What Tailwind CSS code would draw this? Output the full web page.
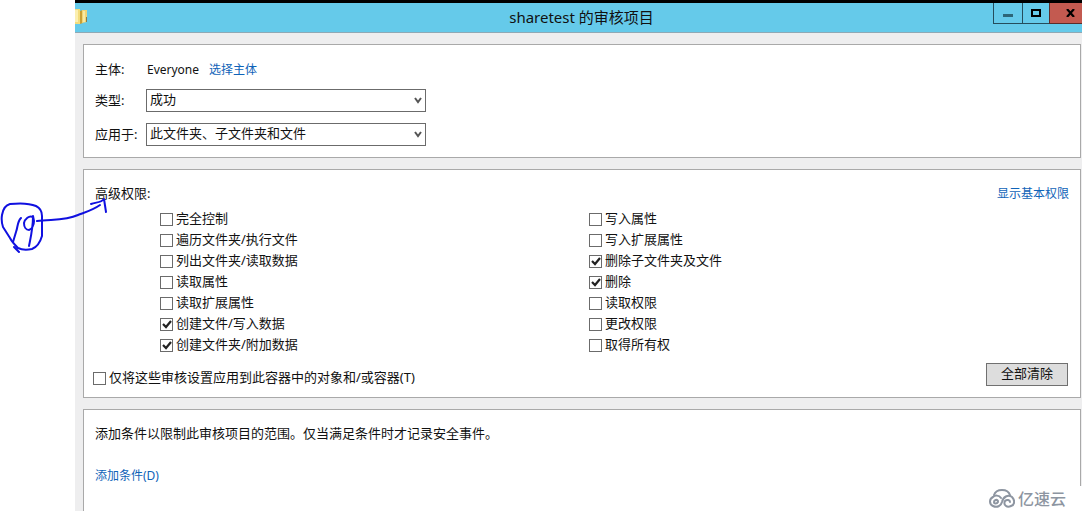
<!DOCTYPE html>
<html lang="zh-CN">
<head>
<meta charset="utf-8">
<meta name="viewport" content="width=device-width, initial-scale=1">
<title>sharetest 的审核项目</title>
<script src="https://cdn.jsdelivr.net/npm/@tailwindcss/browser@4"></script>
</head>
<body class="relative flex min-h-screen bg-white pl-[75px] font-['Noto_Sans','Noto_Sans_CJK_SC',sans-serif] text-[13px] leading-[21px] text-[#111]">
<svg class="hidden" aria-hidden="true"><symbol id="tick" viewBox="0 0 13 13"><path d="M3 6l3 3 5-6" fill="none" stroke="#222" stroke-width="2.2"/></symbol></svg>
<div class="flex min-w-0 flex-1 flex-col border-t-3 border-black bg-[#eeeeef]">
  <header class="flex h-[30px] items-start border-b border-[#8fa9b5] bg-[#65caea]">
    <div class="flex flex-1 pt-1.5">
      <svg class="h-[15px] w-[13px]" viewBox="0 0 13 15" aria-hidden="true">
        <path d="M0 0h5v15H0z" fill="#f3dc7c"/><path d="M0 1h3v12H0z" fill="#fbefb0"/>
        <path d="M5 2l3-1v13l-3 1z" fill="#c99f35"/><path d="M7 1h5v12l-5 1z" fill="#f0d576"/><path d="M8 2h2v11H8z" fill="#f9e9a3"/><path d="M11 8h1v5h-1z" fill="#8b7b4a"/>
      </svg>
    </div>
    <h1 class="pt-[3px] pl-1.5 text-[15px] leading-[22px]">sharetest 的审核项目</h1>
    <div class="flex flex-1 justify-end">
      <button type="button" aria-label="最小化" class="flex h-[21px] w-[29px] items-center justify-center border-b border-l border-[#254d5c] pt-1"><svg class="h-[3px] w-[10px]" viewBox="0 0 10 3"><path d="M0 0h10v3H0z" fill="#2d6678"/></svg></button>
      <button type="button" aria-label="最大化" class="flex h-[21px] w-[27px] items-center justify-center border-b border-l border-[#254d5c]"><svg class="h-[8px] w-[10px]" viewBox="0 0 10 8"><path d="M1 1h8v6H1z" fill="none" stroke="#000" stroke-width="2"/></svg></button>
      <button type="button" aria-label="关闭" class="flex h-[21px] w-[33px] items-center justify-end border-b border-l border-[#5c2d2a] bg-[#c35a50] pr-[7px]"><svg class="h-[8px] w-[9px]" viewBox="0 0 9 8"><path d="M1 0l7 8M8 0L1 8" stroke="#000" stroke-width="2.2"/></svg></button>
    </div>
  </header>

  <main class="flex flex-1 flex-col gap-[11px] pt-[11px] pr-px pl-2">
    <section class="flex flex-col gap-[11px] border border-[#a9a9a9] bg-white pt-[15px] pb-[11px] pl-[11px]">
      <div class="flex h-[18px] items-center">
        <span class="w-[52px]">主体:</span>
        <span class="text-[12px]">Everyone</span>
        <a href="#" class="ml-[10px] text-[12px] text-[#0f63b8]">选择主体</a>
      </div>
      <div class="flex h-[23px] items-center">
        <label for="type" class="w-[51px] shrink-0">类型:</label>
        <div class="relative w-[280px]">
          <select id="type" class="block h-[23px] w-full appearance-none border border-[#6b6b6b] bg-white pr-5 pb-0.5 pl-[3px] leading-[19px]"><option>成功</option><option>失败</option><option>全部</option></select>
          <svg class="pointer-events-none absolute top-2 right-1 h-[7px] w-[8px]" viewBox="0 0 8 7" aria-hidden="true"><path d="M1 1l3 4 3-4" fill="none" stroke="#555" stroke-width="2"/></svg>
        </div>
      </div>
      <div class="flex h-[23px] items-center">
        <label for="scope" class="w-[51px] shrink-0">应用于:</label>
        <div class="relative w-[280px]">
          <select id="scope" class="block h-[23px] w-full appearance-none border border-[#6b6b6b] bg-white pr-5 pb-0.5 pl-[3px] leading-[19px]"><option>此文件夹、子文件夹和文件</option><option>只有该文件夹</option></select>
          <svg class="pointer-events-none absolute top-2 right-1 h-[7px] w-[8px]" viewBox="0 0 8 7" aria-hidden="true"><path d="M1 1l3 4 3-4" fill="none" stroke="#555" stroke-width="2"/></svg>
        </div>
      </div>
    </section>

    <section class="border border-[#a9a9a9] bg-white pt-[13px] pr-[11px] pb-[11px] pl-[9px]">
      <div class="flex items-center justify-between pl-0.5">
        <h2>高级权限:</h2>
        <a href="#" class="text-[12px] text-[#0f63b8]">显示基本权限</a>
      </div>
      <div class="mt-1 flex pl-[67px]">
        <div class="flex w-[429px] flex-col">
          <label class="flex items-center gap-[3px]"><span class="mt-0.5 grid size-[13px]"><input type="checkbox" class="peer col-start-1 row-start-1 size-[13px] appearance-none border border-[#6b6b6b] bg-white"><svg class="pointer-events-none invisible col-start-1 row-start-1 size-[13px] peer-checked:visible"><use href="#tick"/></svg></span>完全控制</label>
          <label class="flex items-center gap-[3px]"><span class="mt-0.5 grid size-[13px]"><input type="checkbox" class="peer col-start-1 row-start-1 size-[13px] appearance-none border border-[#6b6b6b] bg-white"><svg class="pointer-events-none invisible col-start-1 row-start-1 size-[13px] peer-checked:visible"><use href="#tick"/></svg></span>遍历文件夹/执行文件</label>
          <label class="flex items-center gap-[3px]"><span class="mt-0.5 grid size-[13px]"><input type="checkbox" class="peer col-start-1 row-start-1 size-[13px] appearance-none border border-[#6b6b6b] bg-white"><svg class="pointer-events-none invisible col-start-1 row-start-1 size-[13px] peer-checked:visible"><use href="#tick"/></svg></span>列出文件夹/读取数据</label>
          <label class="flex items-center gap-[3px]"><span class="mt-0.5 grid size-[13px]"><input type="checkbox" class="peer col-start-1 row-start-1 size-[13px] appearance-none border border-[#6b6b6b] bg-white"><svg class="pointer-events-none invisible col-start-1 row-start-1 size-[13px] peer-checked:visible"><use href="#tick"/></svg></span>读取属性</label>
          <label class="flex items-center gap-[3px]"><span class="mt-0.5 grid size-[13px]"><input type="checkbox" class="peer col-start-1 row-start-1 size-[13px] appearance-none border border-[#6b6b6b] bg-white"><svg class="pointer-events-none invisible col-start-1 row-start-1 size-[13px] peer-checked:visible"><use href="#tick"/></svg></span>读取扩展属性</label>
          <label class="flex items-center gap-[3px]"><span class="mt-0.5 grid size-[13px]"><input type="checkbox" checked class="peer col-start-1 row-start-1 size-[13px] appearance-none border border-[#6b6b6b] bg-white"><svg class="pointer-events-none invisible col-start-1 row-start-1 size-[13px] peer-checked:visible"><use href="#tick"/></svg></span>创建文件/写入数据</label>
          <label class="flex items-center gap-[3px]"><span class="mt-0.5 grid size-[13px]"><input type="checkbox" checked class="peer col-start-1 row-start-1 size-[13px] appearance-none border border-[#6b6b6b] bg-white"><svg class="pointer-events-none invisible col-start-1 row-start-1 size-[13px] peer-checked:visible"><use href="#tick"/></svg></span>创建文件夹/附加数据</label>
        </div>
        <div class="flex flex-1 flex-col">
          <label class="flex items-center gap-[3px]"><span class="mt-0.5 grid size-[13px]"><input type="checkbox" class="peer col-start-1 row-start-1 size-[13px] appearance-none border border-[#6b6b6b] bg-white"><svg class="pointer-events-none invisible col-start-1 row-start-1 size-[13px] peer-checked:visible"><use href="#tick"/></svg></span>写入属性</label>
          <label class="flex items-center gap-[3px]"><span class="mt-0.5 grid size-[13px]"><input type="checkbox" class="peer col-start-1 row-start-1 size-[13px] appearance-none border border-[#6b6b6b] bg-white"><svg class="pointer-events-none invisible col-start-1 row-start-1 size-[13px] peer-checked:visible"><use href="#tick"/></svg></span>写入扩展属性</label>
          <label class="flex items-center gap-[3px]"><span class="mt-0.5 grid size-[13px]"><input type="checkbox" checked class="peer col-start-1 row-start-1 size-[13px] appearance-none border border-[#6b6b6b] bg-white"><svg class="pointer-events-none invisible col-start-1 row-start-1 size-[13px] peer-checked:visible"><use href="#tick"/></svg></span>删除子文件夹及文件</label>
          <label class="flex items-center gap-[3px]"><span class="mt-0.5 grid size-[13px]"><input type="checkbox" checked class="peer col-start-1 row-start-1 size-[13px] appearance-none border border-[#6b6b6b] bg-white"><svg class="pointer-events-none invisible col-start-1 row-start-1 size-[13px] peer-checked:visible"><use href="#tick"/></svg></span>删除</label>
          <label class="flex items-center gap-[3px]"><span class="mt-0.5 grid size-[13px]"><input type="checkbox" class="peer col-start-1 row-start-1 size-[13px] appearance-none border border-[#6b6b6b] bg-white"><svg class="pointer-events-none invisible col-start-1 row-start-1 size-[13px] peer-checked:visible"><use href="#tick"/></svg></span>读取权限</label>
          <label class="flex items-center gap-[3px]"><span class="mt-0.5 grid size-[13px]"><input type="checkbox" class="peer col-start-1 row-start-1 size-[13px] appearance-none border border-[#6b6b6b] bg-white"><svg class="pointer-events-none invisible col-start-1 row-start-1 size-[13px] peer-checked:visible"><use href="#tick"/></svg></span>更改权限</label>
          <label class="flex items-center gap-[3px]"><span class="mt-0.5 grid size-[13px]"><input type="checkbox" class="peer col-start-1 row-start-1 size-[13px] appearance-none border border-[#6b6b6b] bg-white"><svg class="pointer-events-none invisible col-start-1 row-start-1 size-[13px] peer-checked:visible"><use href="#tick"/></svg></span>取得所有权</label>
        </div>
      </div>
      <div class="mt-2 flex h-[23px] items-start justify-between">
        <label class="mt-1 flex items-center gap-[3px]"><span class="mt-0.5 grid size-[13px]"><input type="checkbox" class="peer col-start-1 row-start-1 size-[13px] appearance-none border border-[#6b6b6b] bg-white"><svg class="pointer-events-none invisible col-start-1 row-start-1 size-[13px] peer-checked:visible"><use href="#tick"/></svg></span>仅将这些审核设置应用到此容器中的对象和/或容器(T)</label>
        <button type="button" class="mr-px h-[23px] w-[82px] border border-[#707070] bg-[#dddddd] pb-0.5 leading-[19px]">全部清除</button>
      </div>
    </section>

    <section class="flex flex-1 flex-col items-start gap-[21px] border border-b-0 border-[#a9a9a9] bg-white pt-[13px] pl-[11px]">
      <p>添加条件以限制此审核项目的范围。仅当满足条件时才记录安全事件。</p>
      <a href="#" class="text-[12px] text-[#0f63b8]">添加条件(D)</a>
    </section>
  </main>
</div>

<!-- Hand-drawn step marker: circled 19 with an arrow to the permissions heading -->
<svg class="pointer-events-none absolute top-[190px] left-0 h-[70px] w-[112px]" viewBox="0 0 112 70" fill="none" stroke="#1010e0" stroke-width="2" stroke-linecap="round" stroke-linejoin="round" role="img" aria-label="19">
  <path d="M2 25C3 19 6 15 10 14C19 13 29 13 36 16C40 18 42 22 42 26L42 46C40 53 37 57 32 59C27 60 22 60 18 58C15 55 12 52 10 48L3 37Q1 31 2 25M14 57l5 5"/>
  <path d="M21 28C17 32 18 37 16 42L13 52"/>
  <path d="M33 27C29 25 25 29 24 33C24 37 26 40 29 40C32 39 34 35 34 31L33 26C33 38 31 46 29 56"/>
  <path d="M37 31C51 29 65 31 78 25C86 22 93 20 100 15M91 14C96 12 101 13 104 9L106 22"/>
</svg>

<!-- Site watermark -->
<div class="absolute right-0 bottom-0 flex h-[25px] items-center gap-[3px] bg-white pr-4 pl-2 text-[16px] leading-[24px] font-medium text-[#8d95a1]">
  <svg class="h-[19px] w-[26px]" viewBox="0 0 26 19" fill="none" stroke="#8d95a1" stroke-width="2" stroke-linecap="round" aria-hidden="true">
    <path d="M5 6C6 3 9 1 13 1C17 1 20 3 21 6"/>
    <path d="M12 9C10 6 6 6 4 8C0 10 0 15 4 17C8 19 12 17 13 13C14 8 19 5 23 8C26 11 26 16 22 17C18 19 14 16 16 12C18 10 21 11 21 13"/>
    <path d="M9 12C8 10 5 11 5 13C5 15 8 15 9 13"/>
  </svg>
  <span>亿速云</span>
</div>
</body>
</html>
